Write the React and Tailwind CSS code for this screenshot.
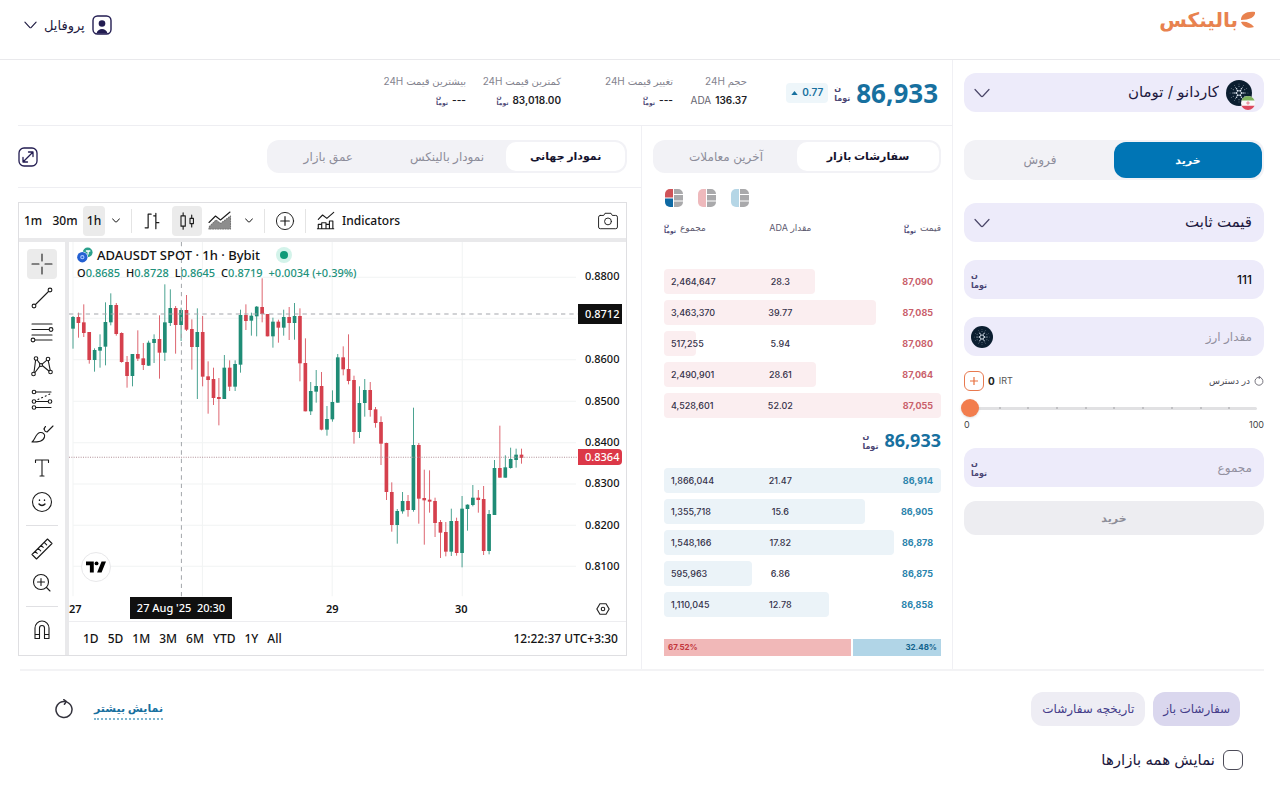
import { useState } from 'react';

const ASKS = [
  { total: '2,464,647', amount: '28.3', price: '87,090' },
  { total: '3,463,370', amount: '39.77', price: '87,085' },
  { total: '517,255', amount: '5.94', price: '87,080' },
  { total: '2,490,901', amount: '28.61', price: '87,064' },
  { total: '4,528,601', amount: '52.02', price: '87,055' },
];

const BIDS = [
  { total: '1,866,044', amount: '21.47', price: '86,914' },
  { total: '1,355,718', amount: '15.6', price: '86,905' },
  { total: '1,548,166', amount: '17.82', price: '86,878' },
  { total: '595,963', amount: '6.86', price: '86,875' },
  { total: '1,110,045', amount: '12.78', price: '86,858' },
];

// [high, body top, body bottom, low, 1 = up / 0 = down], in chart units
const CANDLES = [
  [375, 378, 413, 473, 1], [365, 378, 396, 440, 0], [340, 394, 426, 438, 0], [423, 423, 507, 518, 0],
  [472, 477, 507, 542, 1], [430, 468, 479, 530, 1], [334, 393, 467, 523, 1], [307, 342, 394, 403, 1],
  [336, 342, 429, 434, 0], [424, 426, 513, 515, 0], [495, 513, 555, 590, 0], [489, 489, 555, 586, 1],
  [418, 489, 503, 510, 0], [456, 502, 522, 537, 0], [449, 455, 524, 525, 1], [430, 444, 456, 516, 1],
  [373, 444, 485, 563, 0], [280, 394, 485, 510, 1], [295, 351, 396, 405, 1], [345, 351, 402, 488, 0],
  [350, 357, 402, 450, 1], [312, 357, 416, 420, 0], [385, 414, 468, 536, 0], [352, 423, 468, 624, 1],
  [375, 423, 557, 586, 0], [511, 556, 567, 668, 0], [530, 564, 621, 642, 0], [561, 618, 624, 703, 0],
  [492, 530, 624, 624, 1], [508, 530, 587, 600, 0], [508, 519, 587, 600, 1], [356, 372, 521, 545, 1],
  [340, 372, 390, 417, 0], [365, 374, 389, 434, 1], [345, 347, 376, 436, 1], [262, 348, 369, 394, 0],
  [369, 369, 436, 436, 0], [380, 392, 436, 470, 1], [386, 392, 410, 455, 0], [356, 378, 410, 434, 1],
  [348, 378, 396, 447, 0], [336, 375, 396, 446, 1], [352, 375, 517, 571, 0], [442, 516, 661, 661, 0],
  [573, 600, 661, 672, 1], [537, 585, 602, 635, 1], [543, 585, 716, 718, 0], [645, 684, 716, 734, 1],
  [598, 633, 685, 692, 1], [489, 499, 635, 635, 1], [466, 499, 535, 553, 0], [430, 534, 570, 580, 0],
  [554, 567, 723, 758, 0], [586, 636, 723, 741, 1], [564, 597, 636, 677, 1], [573, 597, 657, 677, 0],
  [648, 655, 696, 710, 0], [676, 693, 758, 822, 0], [755, 756, 903, 927, 0], [874, 903, 1002, 1022, 0],
  [954, 960, 1002, 1058, 1], [903, 930, 961, 968, 1], [912, 930, 957, 977, 0], [650, 762, 957, 962, 1],
  [756, 762, 923, 998, 0], [836, 921, 928, 1061, 0], [838, 926, 932, 965, 0], [920, 930, 996, 1038, 0],
  [987, 993, 1025, 1101, 0], [993, 1023, 1082, 1096, 0], [953, 990, 1082, 1095, 1], [980, 990, 1086, 1094, 0],
  [915, 953, 1086, 1129, 1], [940, 941, 954, 1019, 1], [882, 920, 942, 946, 1], [897, 920, 927, 965, 0],
  [885, 924, 1080, 1092, 0], [957, 969, 1080, 1090, 1], [807, 831, 972, 972, 1], [704, 831, 860, 860, 0],
  [793, 829, 860, 860, 1], [770, 804, 831, 833, 1], [773, 791, 807, 830, 1], [773, 791, 801, 818, 0],
];

const PRICE_LABELS = ['0.8800', '', '0.8600', '0.8500', '0.8400', '0.8300', '0.8200', '0.8100'];
const RANGES = ['1D', '5D', '1M', '3M', '6M', 'YTD', '1Y', 'All'];

function Toman({ large }) {
  return (
    <span
      className={
        large
          ? 'inline-block w-[18px] shrink-0 text-left text-[8px] leading-[10px] font-bold whitespace-nowrap text-[#4b4674]'
          : 'inline-block w-3 shrink-0 text-left text-[6px] leading-[6px] font-bold whitespace-nowrap text-[#4b4674]'
      }
    >
      ن
      <br />
      توما
    </span>
  );
}

function Chevron({ className, weight = 1 }) {
  return (
    <svg viewBox="0 0 16 10" className={className} fill="none" stroke="currentColor" strokeWidth={weight} strokeLinecap="round">
      <path d="M1 1.500 7 8q1 1 2 0l6-6.500" />
    </svg>
  );
}

function Cardano({ className }) {
  const ring = (r, n, size) =>
    Array.from({ length: n }, (_, i) => {
      const a = (i / n) * Math.PI * 2;
      return <circle key={`${r}-${i}`} cx={16 + r * Math.cos(a)} cy={16 + r * Math.sin(a)} r={size} />;
    });
  return (
    <svg viewBox="0 0 32 32" className={className} aria-hidden="true">
      <circle cx="16" cy="16" r="16" fill="#0b1e30" />
      <g fill="#dfe8f2">
        {ring(3.2, 6, 1.3)}
        {ring(6, 6, 0.9)}
        {ring(8.2, 12, 0.6)}
        {ring(11, 12, 0.45)}
      </g>
    </svg>
  );
}

function IranFlag({ className }) {
  return (
    <svg viewBox="0 0 16 16" className={className} aria-hidden="true">
      <clipPath id="flag">
        <circle cx="8" cy="8" r="8" />
      </clipPath>
      <g clipPath="url(#flag)">
        <path fill="#fafafa" d="M0 0h16v16H0z" />
        <path fill="#7db15c" d="M0 0h16v5H0z" />
        <path fill="#dd4a5e" d="M0 11h16v5H0z" />
        <circle cx="8" cy="8" r="1.300" fill="none" stroke="#dd4a5e" strokeWidth=".8" />
      </g>
    </svg>
  );
}

function Refresh({ className }) {
  return (
    <svg viewBox="0 0 20 20" className={className} fill="none" stroke="currentColor" strokeWidth="1.500" strokeLinecap="round" strokeLinejoin="round">
      <path d="M13.500 3.300a8 8 0 1 1-3.500-.8h2" />
      <path d="m9.800.600 2.600 1.900-2 2.700" />
    </svg>
  );
}

function ToolIcon({ children, className = 'h-7 w-7' }) {
  return (
    <svg viewBox="0 0 28 28" className={className} fill="none" stroke="#1b1b1b" strokeWidth="1.100" strokeLinecap="round" strokeLinejoin="round">
      {children}
    </svg>
  );
}

const DRAW_TOOLS = [
  { name: 'Cross', icon: <path d="M14 4v7M14 17v7M4 14h7M17 14h7" /> },
  {
    name: 'Trend line',
    icon: (
      <>
        <circle cx="6" cy="22" r="1.900" />
        <circle cx="22" cy="6" r="1.900" />
        <path d="M7.500 20.500 20.500 7.500" />
      </>
    ),
  },
  {
    name: 'Fib retracement',
    icon: (
      <>
        <path d="M4 6h20M4 11.500h17M7 22h17M4 17h20" />
        <circle cx="23" cy="11.500" r="1.900" />
        <circle cx="5" cy="22" r="1.900" />
      </>
    ),
  },
  {
    name: 'Pattern',
    icon: (
      <>
        <circle cx="8" cy="6.500" r="1.800" />
        <circle cx="20" cy="7" r="1.800" />
        <circle cx="13" cy="13" r="1.500" />
        <circle cx="5.500" cy="22" r="1.800" />
        <circle cx="22.500" cy="20" r="1.800" />
        <path d="M7.600 8.300 6 20.200M9.200 8l2.800 3.800M18.600 8.400l-4.500 3.700M20.300 8.900l1.900 9.200M11.800 14.200l-4.800 6.300M14.500 13.800l6.400 5.200" />
      </>
    ),
  },
  {
    name: 'Position',
    icon: (
      <>
        <circle cx="6" cy="6" r="1.800" />
        <circle cx="6" cy="15.500" r="1.800" />
        <circle cx="22" cy="15.500" r="1.800" />
        <circle cx="6" cy="21.500" r="1.800" />
        <path d="M8 6h15M8 15.500h12M8 21.500h15" />
        <path strokeDasharray="1 3" d="M10 13.500 22 8" />
      </>
    ),
  },
  {
    name: 'Brush',
    icon: (
      <path d="M4 22c3-2 3.500-8.500 8-9.500 3-.5 5.300 2 4.500 4.500-1.200 4.500-6 5-12.500 5ZM17.500 6.500c-2 2-1.500 5 1.500 5.500M19 12 25 6M17.500 6.500 15.800 9" />
    ),
  },
  { name: 'Text', icon: <path d="M7.500 8.500v-2.500h13v2.500M14 6v16M12 22h4" /> },
  {
    name: 'Emoji',
    icon: (
      <>
        <circle cx="14" cy="14" r="9.500" />
        <path d="M11.500 12v.4M16.500 12v.4M11 16c1.500 1.900 4.500 1.900 6 0" strokeWidth="1.400" />
      </>
    ),
  },
  {
    name: 'Measure',
    divider: true,
    icon: (
      <>
        <path d="M4 19.500 19.500 4l4.500 4.500L8.500 24ZM7.200 16.300l2 2M10.200 13.300l2.500 2.500M13.200 10.300l2 2M16.200 7.300l2.500 2.500" />
      </>
    ),
  },
  {
    name: 'Zoom in',
    icon: (
      <>
        <circle cx="13" cy="13" r="7.500" />
        <path d="M13 9.500v7M9.500 13h7M18.500 18.500l3.500 3.500" />
      </>
    ),
  },
  {
    name: 'Magnet',
    divider: true,
    icon: <path d="M7 22.500V12a7 7 0 0 1 14 0v10.500h-4.500V12a2.500 2.500 0 0 0-5 0v10.500ZM7 18.500h4.500M16.500 18.500H21" />,
  },
];

function ChartToolbar() {
  const btn = 'flex h-[30px] items-center justify-center rounded';
  return (
    <div className="flex h-[35px] items-center pr-1 text-[12px] font-medium">
      <button type="button" className={`${btn} w-7`}>1m</button>
      <button type="button" className={`${btn} w-9`}>30m</button>
      <button type="button" className={`${btn} w-[22px] bg-[#ebebeb]`}>1h</button>
      <button type="button" aria-label="Intervals" className={`${btn} w-[22px]`}>
        <Chevron className="h-[5px] w-2" weight={2} />
      </button>
      <span className="mx-1 h-6 w-px bg-[#e4e4e4]" />
      <button type="button" aria-label="Bars" className={`${btn} w-8`}>
        <ToolIcon className="h-6 w-6">
          <path d="M6 22h3.500V6H13M9.500 6v16M22 16h-3.500M18.500 5v18M18.500 8H16" strokeWidth="1.400" />
        </ToolIcon>
      </button>
      <button type="button" aria-label="Candles" className={`${btn} ml-1 w-[30px] bg-[#ebebeb]`}>
        <ToolIcon className="h-6 w-6">
          <path d="M7 8h5v12H7zM9.500 4.500V8M9.500 20v3.500M17.500 11h4v6h-4zM19.500 7v4M19.500 17v4" strokeWidth="1.300" />
        </ToolIcon>
      </button>
      <button type="button" aria-label="Area" className={`${btn} w-9`}>
        <ToolIcon className="h-7 w-7">
          <path d="M3 15.500 9.500 9l5 4L24 5" />
          <path d="M3 22v-2l7-7 4.500 3.500L24.500 9v13Z" fill="#8d8d8d" stroke="#777" strokeDasharray="1 1.500" />
        </ToolIcon>
      </button>
      <button type="button" aria-label="Chart types" className={`${btn} w-[22px]`}>
        <Chevron className="h-[5px] w-2" weight={2} />
      </button>
      <span className="mr-2 ml-1 h-6 w-px bg-[#e4e4e4]" />
      <button type="button" aria-label="Compare" className={`${btn} w-6`}>
        <ToolIcon className="h-6 w-6">
          <circle cx="14" cy="14" r="10" />
          <path d="M14 9v10M9 14h10" strokeWidth="1.400" />
        </ToolIcon>
      </button>
      <span className="mr-2 ml-2 h-6 w-px bg-[#e4e4e4]" />
      <button type="button" className={`${btn} gap-1`}>
        <ToolIcon className="h-6 w-6">
          <path d="M5 12l5-5 5 4 8-7M5 23v-5h4v5M9 23v-7h5v7M14 23v-5h4v5M18 23v-9h4v9M4 23h19" strokeWidth="1.300" />
        </ToolIcon>
        Indicators
      </button>
      <button type="button" aria-label="Snapshot" className={`${btn} ml-auto w-7`}>
        <ToolIcon className="h-6 w-6">
          <path d="M5 7.500h4l1.500-2.500h7L19 7.500h4a2 2 0 0 1 2 2V21a2 2 0 0 1-2 2H5a2 2 0 0 1-2-2V9.500a2 2 0 0 1 2-2Z" />
          <circle cx="14" cy="14.500" r="4" />
        </ToolIcon>
      </button>
    </div>
  );
}

function Plot() {
  return (
    <svg viewBox="208 153 1526 1068" preserveAspectRatio="none" className="block h-[356px] w-full">
      <g stroke="#f1f3f3" strokeWidth="3">
        {[259, 382, 506, 631, 755, 879, 1003, 1126].map((y) => (
          <path key={y} d={`M220 ${y}H1728`} />
        ))}
        {[220, 608, 997, 1387].map((x) => (
          <path key={x} d={`M${x} 153V1216`} />
        ))}
      </g>
      {CANDLES.map(([high, top, bottom, low, up], i) => {
        const x = 220 + i * 16.2;
        const fill = up ? '#1f8c76' : '#d5404d';
        return (
          <g key={i} fill={fill}>
            <rect x={x - 1.2} y={high} width="2.400" height={low - high} />
            <rect x={x - 5.5} y={top} width="11" height={bottom - top} />
          </g>
        );
      })}
      <path d="M208 799H1734" stroke="#b08f96" strokeWidth="3" strokeDasharray="3 4" />
      <path d="M208 369H1734M545 153V1221" stroke="#a3a6ab" strokeWidth="3" strokeDasharray="13 12" fill="none" />
    </svg>
  );
}

function Chart() {
  return (
    <div dir="ltr" className="mr-[14px] border border-[#dfdfe2] font-['Noto_Sans',sans-serif] text-[#131313]">
      <ChartToolbar />
      <div className="flex border-t-[4px] border-[#e9e9eb]">
        <div className="flex w-[50px] shrink-0 flex-col items-center gap-1 border-r-[4px] border-[#e9e9eb] pt-[7px]">
          {DRAW_TOOLS.map((tool, i) => (
            <div key={tool.name} className="flex flex-col items-center">
              {tool.divider && <span className="mt-1 mb-2 h-px w-8 bg-[#e0e0e3]" />}
              <button
                type="button"
                aria-label={tool.name}
                className={
                  i === 0
                    ? 'flex h-[30px] w-[30px] items-center justify-center rounded bg-[#ebebeb]'
                    : 'flex h-[30px] w-[30px] items-center justify-center rounded'
                }
              >
                <ToolIcon>{tool.icon}</ToolIcon>
              </button>
            </div>
          ))}
        </div>
        <div className="min-w-0 flex-1">
          <div className="flex">
            <div className="relative min-w-0 flex-1">
              <Plot />
              <div className="absolute top-[3px] left-2">
                <div className="flex items-center gap-1 text-[13px] leading-5 font-medium">
                  <svg viewBox="0 0 18 18" className="h-4 w-4">
                    <circle cx="12" cy="6" r="5.500" fill="#2aa08c" />
                    <path d="M10 4.500h5M12.500 4.500v4" stroke="#fff" strokeWidth="1.500" />
                    <circle cx="6" cy="11.500" r="6.500" fill="#fff" />
                    <circle cx="6" cy="11.500" r="5.800" fill="#2360d2" />
                    <circle cx="6" cy="11.500" r="1.800" fill="none" stroke="#a9c5ff" strokeWidth="1.200" />
                  </svg>
                  ADAUSDT SPOT · 1h · Bybit
                  <span className="ml-3 flex h-4 w-4 items-center justify-center rounded-full bg-[#d3f3ea]">
                    <span className="h-2 w-2 rounded-full bg-[#0f9a78]" />
                  </span>
                </div>
                <div className="flex gap-[6px] text-[11px] leading-4 font-medium text-[#21917b]">
                  <span><b className="font-medium text-[#131313]">O</b>0.8685</span>
                  <span><b className="font-medium text-[#131313]">H</b>0.8728</span>
                  <span><b className="font-medium text-[#131313]">L</b>0.8645</span>
                  <span><b className="font-medium text-[#131313]">C</b>0.8719</span>
                  <span>+0.0034 (+0.39%)</span>
                </div>
              </div>
              <div className="absolute bottom-4 left-3 flex h-[30px] w-[30px] items-center justify-center rounded-full border border-[#e8e8ea] bg-white">
                <svg viewBox="0 0 36 20" className="h-3 w-5">
                  <path d="M0 0h14v20H7V7H0zM28 0h8l-8 20h-8z" />
                  <circle cx="19" cy="3.500" r="3.500" />
                </svg>
              </div>
            </div>
            <div className="relative w-12 shrink-0 pt-[14px] text-[11px] font-medium">
              <ul className="grid h-[331px] grid-rows-8">
                {PRICE_LABELS.map((label, i) => (
                  <li key={i} className="flex items-center pl-[7px]">{label}</li>
                ))}
              </ul>
              <span className="absolute top-[62px] right-1 left-0 bg-[#101010] py-px pl-[7px] leading-[18px] text-white">0.8712</span>
              <span className="absolute top-[207px] right-1 left-0 rounded-r-sm bg-[#dc3848] pl-[7px] leading-4 text-white">0.8364</span>
            </div>
          </div>
          <div className="relative h-[23px] text-[11px] leading-[22px] font-semibold">
            <span className="absolute left-0">27</span>
            <span className="absolute -top-px left-[61px] w-[102px] bg-[#101010] text-center font-medium whitespace-pre text-white">27 Aug '25  20:30</span>
            <span className="absolute left-[257px]">29</span>
            <span className="absolute left-[386px]">30</span>
            <button type="button" aria-label="Settings" className="absolute top-1 right-4">
              <svg viewBox="0 0 16 16" className="h-[14px] w-[14px]" fill="none" stroke="#222" strokeWidth="1.300">
                <path d="M4.500 2h7L15 8l-3.500 6h-7L1 8Z" />
                <circle cx="8" cy="8" r="2" />
              </svg>
            </button>
          </div>
          <div className="flex h-[34px] items-center border-t border-[#ededf0] pr-2 pl-[14px] text-[12px] font-medium">
            <div className="flex gap-[9px]">
              {RANGES.map((r) => (
                <button type="button" key={r}>{r}</button>
              ))}
            </div>
            <span className="ml-auto">12:22:37 UTC+3:30</span>
          </div>
        </div>
      </div>
    </div>
  );
}

function Stat({ label, className, children }) {
  return (
    <div className={className}>
      <div className="text-[10px] leading-4 whitespace-nowrap text-[#84848f]">
        {label} <bdi>24H</bdi>
      </div>
      <div className="mt-[3px] flex h-4 items-center gap-1 text-[10px] leading-4 font-semibold whitespace-nowrap text-[#1d1d26]">
        {children}
      </div>
    </div>
  );
}

function Tabs({ items, active, onChange, className }) {
  return (
    <div className={`flex rounded-xl bg-[#f2f2f6] p-[2px] ${className}`}>
      {items.map((item, i) => (
        <button
          type="button"
          key={item}
          onClick={() => onChange(i)}
          className={
            i === active
              ? 'h-[29px] flex-1 rounded-[10px] bg-white text-[11px] font-bold text-[#15132e]'
              : 'h-[29px] flex-1 rounded-[10px] text-[12px] text-[#8d8d9a]'
          }
        >
          {item}
        </button>
      ))}
    </div>
  );
}

function toNumber(text) {
  return Number(text.replace(/,/g, ''));
}

function OrderTable({ rows, side, label, head }) {
  const max = Math.max(...rows.map((r) => toNumber(r.total)));
  return (
    <table aria-label={label} className="w-full table-fixed text-[9px]">
      <colgroup>
        <col className="w-[43%]" />
        <col className="w-[30%]" />
        <col className="w-[27%]" />
      </colgroup>
      {head && (
        <thead>
          <tr className="h-4 text-[#5d5a70]">
            <th className="text-right font-normal">
              <span className="flex items-center gap-1">قیمت <Toman /></span>
            </th>
            <th className="pr-0 pl-5 text-center font-normal whitespace-nowrap">مقدار ADA</th>
            <th className="font-normal">
              <span className="flex items-center justify-end gap-1">مجموع <Toman /></span>
            </th>
          </tr>
          <tr className="h-[30px]" />
        </thead>
      )}
      <tbody>
        {rows.map((r) => (
          <tr key={r.price} className="relative h-[31px]">
            <td className={side === 'ask' ? 'pr-2 font-bold text-[#c9606b]' : 'pr-2 font-bold text-[#2a83ac]'}>
              <span
                className={side === 'ask' ? 'absolute top-[3px] left-0 h-[25px] rounded bg-[#fbeef0]' : 'absolute top-[3px] left-0 h-[25px] rounded bg-[#ebf3f8]'}
                style={{ width: `${(toNumber(r.total) / max) * 100}%` }}
              />
              <span className="relative">{r.price}</span>
            </td>
            <td className="text-center font-medium text-[#35324a]">
              <span className="relative">{r.amount}</span>
            </td>
            <td className="pl-[7px] text-left font-medium text-[#35324a]">
              <span className="relative">{r.total}</span>
            </td>
          </tr>
        ))}
      </tbody>
    </table>
  );
}

function BookIcon({ top, bottom }) {
  return (
    <svg viewBox="0 0 18 18" className="h-[18px] w-[18px]">
      <path d="M8 0v8.500H0V5a5 5 0 0 1 5-5z" fill={top} />
      <path d={top === bottom ? 'M8 8v10H5a5 5 0 0 1-5-5V8z' : 'M8 9.500V18H5a5 5 0 0 1-5-5V9.500z'} fill={bottom} />
      <path d="M9 0h4a5 5 0 0 1 5 5H9zM9 6h9v5.500H9zM9 12.500h9V13a5 5 0 0 1-5 5H9z" fill="#a9a9ab" />
    </svg>
  );
}

function OrderBook() {
  const [tab, setTab] = useState(0);
  return (
    <section className="w-[312px] shrink-0 border-x border-[#f0f0f4] px-[11px] pt-[14px] pb-[13px]">
      <Tabs items={['سفارشات بازار', 'آخرین معاملات']} active={tab} onChange={setTab} />
      <div className="pl-[11px]">
        <div dir="ltr" className="mt-4 flex gap-[15px] pl-px">
          <button type="button" aria-label="همه"><BookIcon top="#cf5358" bottom="#0e69a3" /></button>
          <button type="button" aria-label="فروش"><BookIcon top="#eeb9bc" bottom="#eeb9bc" /></button>
          <button type="button" aria-label="خرید"><BookIcon top="#b5d6e6" bottom="#b5d6e6" /></button>
        </div>
        <div className="mt-[13px]">
          <OrderTable rows={ASKS} side="ask" label="سفارشات فروش" head />
        </div>
        <div className="mt-[3px] mb-2 flex h-[33px] items-center gap-1">
          <strong className="font-['Open_Sans',sans-serif] text-[18px] text-[#17709f]">86,933</strong>
          <Toman large />
        </div>
        <OrderTable rows={BIDS} side="bid" label="سفارشات خرید" />
        <div dir="ltr" className="mt-[19px] flex h-[17px] gap-[2px] text-[8px] leading-[17px] font-bold">
          <div className="bg-[#f1b8b8] pl-1 text-[#c2373d]" style={{ width: '67.52%' }}>67.52%</div>
          <div className="flex-1 bg-[#b1d5e7] pr-1 text-right text-[#13638c]">32.48%</div>
        </div>
      </div>
    </section>
  );
}

function TradeForm() {
  const [percent, setPercent] = useState(0);
  const [price, setPrice] = useState('111');
  const field = 'relative flex h-[39px] items-center rounded-xl bg-[#edebfa] text-[#1d1940]';
  return (
    <aside className="w-[327px] shrink-0 pt-[13px] pr-4 pl-[11px]">
      <div className={field}>
        <Cardano className="mr-3 h-[26px] w-[26px]" />
        <IranFlag className="absolute right-[9px] bottom-[2px] h-[14px] w-[14px]" />
        <select aria-label="بازار" className="h-full min-w-0 flex-1 appearance-none bg-transparent pr-[7px] text-[15px]">
          <option>کاردانو / تومان</option>
        </select>
        <Chevron className="pointer-events-none absolute left-[10px] h-[10px] w-4 text-[#4a4668]" weight={1.2} />
      </div>

      <div className="mt-7 flex h-10 rounded-xl bg-[#f2f2f6] p-[2px]">
        <button type="button" className="flex-1 rounded-xl bg-[#0075b5] text-[11px] font-bold text-white">خرید</button>
        <button type="button" className="flex-1 rounded-xl text-[12px] text-[#8d8d9a]">فروش</button>
      </div>

      <div className={`${field} mt-[23px]`}>
        <select aria-label="نوع قیمت" className="h-full w-full appearance-none bg-transparent pr-3 text-[15px]">
          <option>قیمت ثابت</option>
        </select>
        <Chevron className="pointer-events-none absolute left-[10px] h-[10px] w-4 text-[#4a4668]" weight={1.2} />
      </div>

      <label className={`${field} mt-[18px] pl-[7px]`}>
        <input
          aria-label="قیمت"
          value={price}
          onChange={(e) => setPrice(e.target.value)}
          className="min-w-0 flex-1 bg-transparent pr-3 text-[12px] font-medium text-[#111] outline-none"
        />
        <Toman large />
      </label>

      <label className={`${field} mt-[18px] pl-[7px]`}>
        <input aria-label="مقدار ارز" placeholder="مقدار ارز" className="min-w-0 flex-1 bg-transparent pr-3 text-[12px] outline-none placeholder:text-[#92909f]" />
        <Cardano className="h-[22px] w-[22px]" />
      </label>

      <div className="mt-[15px] flex h-5 items-center justify-between text-[9px]">
        <span className="flex items-center gap-1 text-[#4c4a55]">
          <Refresh className="h-[10px] w-[10px]" />
          در دسترس
        </span>
        <span dir="ltr" className="flex items-center gap-1 text-[#555]">
          <button type="button" aria-label="واریز" className="flex h-5 w-5 items-center justify-center rounded-md border border-[#e8794f] text-[#e8703f]">
            <svg viewBox="0 0 10 10" className="h-[10px] w-[10px]" stroke="currentColor" strokeWidth="1.200">
              <path d="M5 1v8M1 5h8" />
            </svg>
          </button>
          <b className="text-[10px] text-[#222]">0</b> IRT
        </span>
      </div>

      <div dir="ltr" className="relative mt-2 -ml-[3px] flex h-[18px] items-center">
        <span className="absolute right-[7px] left-[11px] flex h-[3px] items-center justify-evenly rounded-full bg-[#e1e1e3]">
          {Array.from({ length: 9 }, (_, i) => (
            <span key={i} className="h-[2px] w-[2px] rounded-full bg-[#b5b5b9]" />
          ))}
        </span>
        <input
          type="range"
          aria-label="درصد"
          min="0"
          max="100"
          value={percent}
          onChange={(e) => setPercent(Number(e.target.value))}
          className="relative h-[18px] w-full appearance-none bg-transparent [&::-webkit-slider-thumb]:h-[18px] [&::-webkit-slider-thumb]:w-[18px] [&::-webkit-slider-thumb]:appearance-none [&::-webkit-slider-thumb]:rounded-full [&::-webkit-slider-thumb]:bg-[#f27d4d] [&::-webkit-slider-thumb]:shadow"
        />
      </div>
      <div dir="ltr" className="flex justify-between text-[9px] leading-4 text-[#444]">
        <span>0</span>
        <span>100</span>
      </div>

      <label className={`${field} mt-[15px] pl-[7px]`}>
        <input aria-label="مجموع" placeholder="مجموع" className="min-w-0 flex-1 bg-transparent pr-3 text-[12px] outline-none placeholder:text-[#92909f]" />
        <Toman large />
      </label>
      <button type="button" className="mt-[14px] h-[34px] w-full rounded-xl bg-[#ededf1] text-[11px] font-bold text-[#8d8d98]">
        خرید
      </button>
    </aside>
  );
}

export default function App() {
  const [chartTab, setChartTab] = useState(0);
  return (
    <div dir="rtl" className="min-h-screen bg-white font-['Inter','DejaVu_Sans',sans-serif] text-[#1d1940]">
      <header className="flex h-[60px] items-start justify-between border-b border-[#e9e9ec] px-6">
        <a href="#home" className="flex items-center gap-[2px] pt-1 text-[20px] leading-8 font-bold text-[#e8824f]">
          <svg viewBox="0 0 16 18" className="h-[18px] w-4" fill="currentColor">
            <path d="M1 9C1 3 7 0 15 1c1 5-6 8-14 8ZM1 11c5-1 10 1 13 5-5 2-11 0-13-5Z" />
          </svg>
          بالینکس
        </a>
        <button type="button" className="flex items-center gap-[7px] pt-[15px] text-[13px] leading-5">
          <svg viewBox="0 0 20 20" className="h-5 w-5">
            <rect x="1" y="1" width="18" height="18" rx="4.500" fill="none" stroke="#231d52" strokeWidth="1.400" />
            <circle cx="10" cy="8.500" r="3.300" fill="#231d52" />
            <path d="M4.500 18.500c1-6 10-6 11 0z" fill="#231d52" />
          </svg>
          پروفایل
          <Chevron className="h-2 w-[13px]" weight={1.4} />
        </button>
      </header>

      <main className="flex">
        <TradeForm />
        <div className="min-w-0 flex-1">
          <div className="flex border-r border-[#f0f0f4]">
            <div className="ml-[18px] flex h-[66px] min-w-0 flex-1 items-center border-b border-[#eeeef2] pr-[14px] pb-1">
              <div className="flex w-[191px] shrink-0 items-center gap-1 pt-1">
                <strong className="font-['Open_Sans',sans-serif] text-[26px] leading-8 text-[#17709f]">86,933</strong>
                <Toman large />
                <span className="mr-[2px] flex h-5 items-center gap-1 rounded bg-[#eef6fa] px-[5px] text-[10px] font-semibold text-[#17709f]">
                  0.77
                  <svg viewBox="0 0 8 5" className="h-1 w-[7px]" fill="currentColor"><path d="M4 0l4 5H0z" /></svg>
                </span>
              </div>
              <Stat label="حجم" className="w-[74px]">
                136.37 <span className="font-normal text-[#66646f]">ADA</span>
              </Stat>
              <Stat label="تغییر قیمت" className="w-28">--- <Toman /></Stat>
              <Stat label="کمترین قیمت" className="w-[95px]">83,018.00 <Toman /></Stat>
              <Stat label="بیشترین قیمت" className="w-[95px]">--- <Toman /></Stat>
            </div>
          </div>
          <div className="flex">
            <OrderBook />
            <section className="ml-[18px] min-w-0 flex-1">
              <div className="flex items-center justify-between pt-[14px] pr-[14px]">
                <Tabs
                  items={['نمودار جهانی', 'نمودار بالینکس', 'عمق بازار']}
                  active={chartTab}
                  onChange={setChartTab}
                  className="w-[360px]"
                />
                <button type="button" aria-label="تمام صفحه">
                  <svg viewBox="0 0 20 20" className="h-5 w-5" fill="none" stroke="#231d52" strokeWidth="1.300" strokeLinecap="round" strokeLinejoin="round">
                    <rect x="1" y="1" width="18" height="18" rx="5" />
                    <path d="M5 15 15 5M10.500 5H15v4.500M5 10.500V15h4.500" />
                  </svg>
                </button>
              </div>
              <div className="mt-[14px] h-[15px] border-t border-[#eeeef2]" />
              <Chart />
            </section>
          </div>
        </div>
      </main>

      <footer className="mr-4 ml-5 border-t-2 border-[#f3f3f5] pr-6 pl-[34px]">
        <div className="mt-[21px] flex items-center justify-between">
          <div className="flex gap-2 text-[12px] text-[#453d8a]">
            <button type="button" className="h-[34px] rounded-xl bg-[#dad7ee] px-[10px]">سفارشات باز</button>
            <button type="button" className="h-[34px] rounded-xl bg-[#eeedf4] px-[11px]">تاریخچه سفارشات</button>
          </div>
          <div className="flex items-center gap-5">
            <a href="#more" className="border-b-2 border-dotted border-[#7fb6cf] text-[11px] leading-5 font-bold text-[#17709f]">نمایش بیشتر</a>
            <button type="button" aria-label="بروزرسانی" className="text-[#33323c]"><Refresh className="h-5 w-5" /></button>
          </div>
        </div>
        <label className="mt-6 flex items-center gap-2 text-[15px] leading-5">
          <input type="checkbox" className="-mr-[3px] h-5 w-5 appearance-none rounded-md border border-[#4b4a57] bg-white" />
          نمایش همه بازارها
        </label>
      </footer>
    </div>
  );
}
